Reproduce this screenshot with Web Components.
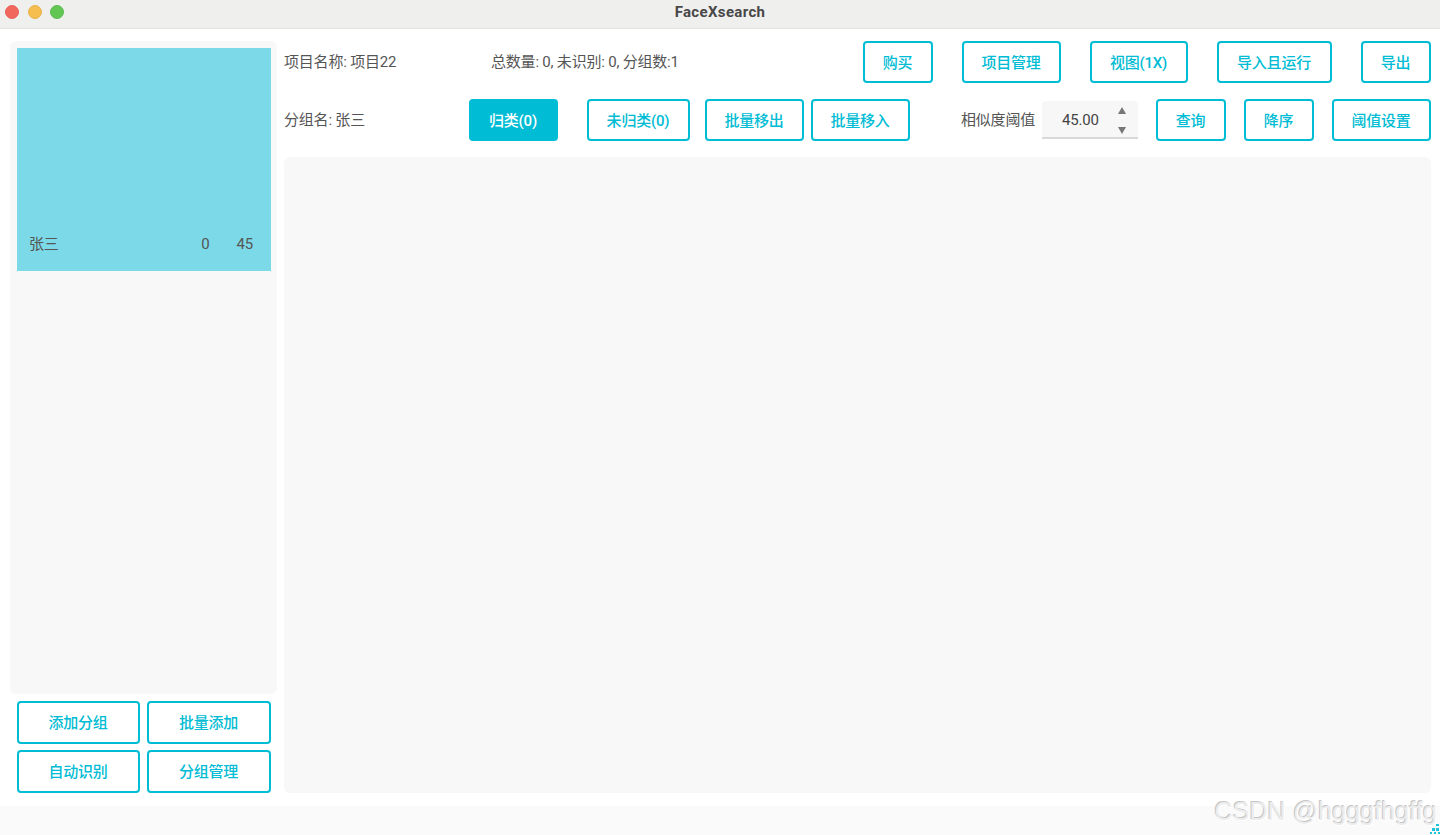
<!DOCTYPE html>
<html lang="zh">
<head>
<meta charset="utf-8">
<title>FaceXsearch</title>
<style>
  html, body { margin: 0; padding: 0; height: 100%; background: #fff; }
  body { font-family: Roboto, "Noto Sans CJK SC", sans-serif; font-size: 15px; color: #555; letter-spacing: -.2px; }
</style>
</head>
<body>
<face-app>
  <side-panel slot="side">
    <group-card name="张三" count="0" threshold="45"></group-card>
    <ui-button slot="actions">添加分组</ui-button>
    <ui-button slot="actions">批量添加</ui-button>
    <ui-button slot="actions">自动识别</ui-button>
    <ui-button slot="actions">分组管理</ui-button>
  </side-panel>

  <tool-row style="margin-bottom:16px">
    <span style="width:207px">项目名称: 项目22</span>
    <span>总数量: 0, 未识别: 0, 分组数:1</span>
    <span style="margin-left:auto"></span>
    <ui-button style="margin-right:29px;width:70px">购买</ui-button>
    <ui-button style="margin-right:29px;width:99px">项目管理</ui-button>
    <ui-button style="margin-right:29px;width:98px">视图(1X)</ui-button>
    <ui-button style="margin-right:29px;width:115px">导入且运行</ui-button>
    <ui-button style="width:70px">导出</ui-button>
  </tool-row>

  <tool-row style="margin-bottom:16px">
    <span style="width:185px">分组名: 张三</span>
    <ui-button primary style="margin-right:29px;width:89px">归类(0)</ui-button>
    <ui-button style="margin-right:15px;width:103px">未归类(0)</ui-button>
    <ui-button style="margin-right:7px;width:99px">批量移出</ui-button>
    <ui-button style="width:99px">批量移入</ui-button>
    <span style="margin-left:auto;margin-right:7px">相似度阈值</span>
    <spin-box value="45.00" style="margin-right:18px"></spin-box>
    <ui-button style="margin-right:18px;width:70px">查询</ui-button>
    <ui-button style="margin-right:18px;width:70px">降序</ui-button>
    <ui-button style="width:99px">阈值设置</ui-button>
  </tool-row>

  <result-panel></result-panel>
</face-app>

<script>
// small helper, every element just stamps its own template
function stamp(el, html) {
  let t = document.createElement('template');
  t.innerHTML = html;
  el.attachShadow({mode: 'open'}).appendChild(t.content.cloneNode(true));
}

class TitleBar extends HTMLElement {
  constructor() {
    super();
    stamp(this, `
      <style>
        :host { display: flex; align-items: center; justify-content: center; position: relative;
          box-sizing: border-box; height: 29px; padding-bottom: 4px; flex: none; background: #efefee;
          border-bottom: 1px solid #e2e2e1; }
        .title { font: 700 15px Roboto, "Liberation Sans", sans-serif; color: #484848; letter-spacing: .35px; }
        .lights { position: absolute; left: 5px; top: 5px; display: flex; gap: 8.5px; }
        .lights i { width: 14px; height: 14px; border-radius: 50%; display: block; box-sizing: border-box; }
        .r { background: #f1675c; border: 1px solid #e4625a; }
        .y { background: #f6bd4f; border: 1px solid #e8b34e; }
        .g { background: #62c653; border: 1px solid #5cbc50; }
      </style>
      <div class="lights"><i class="r"></i><i class="y"></i><i class="g"></i></div>
      <div class="title"><slot></slot></div>`);
  }
}

class UiButton extends HTMLElement {
  constructor() {
    super();
    stamp(this, `
      <style>
        :host { display: inline-flex; align-items: center; justify-content: center; box-sizing: border-box;
          height: 42px; padding: 0 1px 2px 0; flex: none; white-space: nowrap;
          border: 2px solid #00bcd4; border-radius: 4px; background: #fff; color: #00bcd4;
          font-size: 15px; font-weight: 500; cursor: pointer; }
        :host([primary]) { background: #00bcd4; color: #fff; }
      </style>
      <slot></slot>`);
  }
}

class ToolRow extends HTMLElement {
  constructor() {
    super();
    stamp(this, `
      <style>
        :host { display: flex; align-items: center; height: 42px; flex: none; }
        ::slotted(span) { padding-bottom: 3px; }
      </style>
      <slot></slot>`);
  }
}

class GroupCard extends HTMLElement {
  constructor() {
    super();
    stamp(this, `
      <style>
        :host { display: flex; align-items: flex-end; box-sizing: border-box; height: 223px;
          padding: 0 18px 17px 12px; background: #7cdae8; color: #555; font-size: 15px; flex: none; }
        .name { margin-right: auto; }
        .count { margin-right: 27px; }
        span { line-height: 20px; }
      </style>
      <span class="name"></span><span class="count"></span><span class="thr"></span>`);
    this.shadowRoot.querySelector('.name').textContent = this.getAttribute('name');
    this.shadowRoot.querySelector('.count').textContent = this.getAttribute('count');
    this.shadowRoot.querySelector('.thr').textContent = this.getAttribute('threshold');
  }
}

class SidePanel extends HTMLElement {
  constructor() {
    super();
    stamp(this, `
      <style>
        :host { display: flex; flex-direction: column; width: 267px; flex: none; }
        .list { flex: 1; background: #f8f8f8; border-radius: 6px; padding: 7px 6px 0 7px; }
        .actions { display: grid; grid-template-columns: 123px 124px; column-gap: 7px; row-gap: 6px;
          padding: 7px 6px 0 7px; }
        ::slotted(ui-button) { height: 43px; }
      </style>
      <div class="list"><slot></slot></div>
      <div class="actions"><slot name="actions"></slot></div>`);
  }
}

class SpinBox extends HTMLElement {
  constructor() {
    super();
    stamp(this, `
      <style>
        :host { display: flex; align-items: center; box-sizing: border-box; width: 96px; height: 38px;
          flex: none; position: relative; background: #f7f7f7; border-bottom: 2px solid #d9d9d9;
          border-radius: 4px 4px 0 0; padding: 1px 0 0 20px; color: #444; font-size: 15px; }
        svg { position: absolute; right: 11px; top: 4px; }
      </style>
      <span class="v"></span>
      <svg width="10" height="30" viewBox="0 0 10 30">
        <path d="M1 9 L5 2 L9 9 Z" fill="#777"/>
        <path d="M1 22 L9 22 L5 29 Z" fill="#777"/>
      </svg>`);
    this.shadowRoot.querySelector('.v').textContent = this.getAttribute('value');
  }
}

class ResultPanel extends HTMLElement {
  constructor() {
    super();
    stamp(this, `
      <style>
        :host { display: block; flex: 1; background: #f8f8f8; border-radius: 6px; }
      </style>`);
  }
}

class FaceApp extends HTMLElement {
  constructor() {
    super();
    stamp(this, `
      <style>
        :host { display: flex; flex-direction: column; height: 835px; width: 1440px; position: relative; overflow: hidden; }
        .body { flex: 1; display: flex; gap: 7px; padding: 12px 9px 13px 10px; min-height: 0; }
        .main { flex: 1; display: flex; flex-direction: column; min-width: 0; }
        .foot { height: 29px; flex: none; background: #fafafa; }
        .mark { position: absolute; right: 3px; bottom: 9px; font: 25px "Liberation Sans", sans-serif;
          color: #ececec; letter-spacing: .1px; white-space: nowrap;
          text-shadow: -1px -1px 0 #c6c6c6, 1px 1px 0 #fff; }
        .grip { position: absolute; right: 0; bottom: 1px; }
      </style>
      <title-bar>FaceXsearch</title-bar>
      <div class="body">
        <slot name="side"></slot>
        <div class="main"><slot></slot></div>
      </div>
      <div class="foot"></div>
      <div class="mark">CSDN @hgggfhgffg</div>
      <svg class="grip" width="10" height="10" viewBox="0 0 10 10" fill="#1cc4da">
        <rect x="6" y="0" width="3" height="2"/>
        <rect x="2" y="4" width="3" height="3"/><rect x="6" y="4" width="3" height="3"/>
        <rect x="0" y="8" width="2" height="2"/><rect x="4" y="8" width="2" height="2"/><rect x="8" y="8" width="2" height="2"/>
      </svg>`);
  }
}

customElements.define('title-bar', TitleBar);
customElements.define('ui-button', UiButton);
customElements.define('tool-row', ToolRow);
customElements.define('group-card', GroupCard);
customElements.define('side-panel', SidePanel);
customElements.define('spin-box', SpinBox);
customElements.define('result-panel', ResultPanel);
customElements.define('face-app', FaceApp);
</script>
</body>
</html>
